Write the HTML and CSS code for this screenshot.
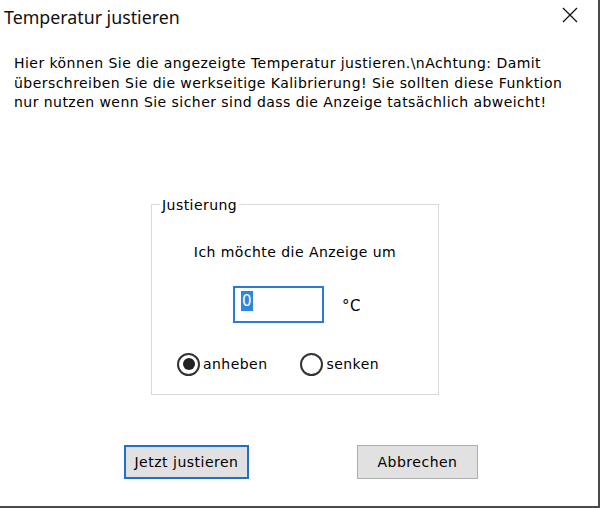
FILE: index.html
```html
<!DOCTYPE html>
<html lang="de">
<head>
<meta charset="utf-8">
<title>Temperatur justieren</title>
<link rel="stylesheet" href="styles.css">
</head>
<body>
<div class="dialog">
  <div class="titlebar">
    <span class="title">Temperatur justieren</span>
    <svg class="close" width="16" height="16" viewBox="0 0 16 16" aria-hidden="true">
      <path d="M1 1 L15 15 M15 1 L1 15" stroke="#111" stroke-width="1.3" fill="none"/>
    </svg>
  </div>
  <p class="message">Hier können Sie die angezeigte Temperatur justieren.\nAchtung: Damit<br>überschreiben Sie die werkseitige Kalibrierung! Sie sollten diese Funktion<br>nur nutzen wenn Sie sicher sind dass die Anzeige tatsächlich abweicht!</p>
  <fieldset class="group">
    <legend class="legend">Justierung</legend>
    <div class="prompt">Ich möchte die Anzeige um</div>
    <div class="value-row">
      <div class="input"><span class="sel">0</span></div>
      <span class="unit">°C</span>
    </div>
    <div class="radios">
      <label class="radio"><span class="dot checked"></span>anheben</label>
      <label class="radio"><span class="dot"></span>senken</label>
    </div>
  </fieldset>
  <div class="buttons">
    <button class="btn default">Jetzt justieren</button>
    <button class="btn">Abbrechen</button>
  </div>
</div>
</body>
</html>
```
FILE: styles.css
```css
html, body {
  margin: 0;
  padding: 0;
  background: #fff;
}
.dialog {
  width: 600px;
  height: 508px;
  box-sizing: border-box;
  border-right: 2px solid #4a4a4a;
  border-bottom: 2px solid #4a4a4a;
  background: #fff;
  display: flex;
  flex-direction: column;
  font-family: "DejaVu Sans", sans-serif;
  font-size: 14px;
  letter-spacing: 0.45px;
  color: #000;
}
.titlebar {
  height: 34px;
  display: flex;
  align-items: center;
  justify-content: space-between;
  padding: 0 20px 0 4px;
}
.title {
  font-family: "Noto Sans", sans-serif;
  font-size: 17.8px;
  letter-spacing: 0;
  line-height: 34px;
  color: #111;
}
.close {
  display: block;
  margin-top: -4px;
}
.message {
  margin: 20px 0 0 14px;
  line-height: 19.5px;
}
.group {
  margin: 84px 0 0 151px;
  width: 288px;
  height: 198px;
  box-sizing: border-box;
  border: 1px solid #d9d9d9;
  padding: 0 8px;
  display: flex;
  flex-direction: column;
  align-items: center;
}
.legend {
  padding: 0 2px;
  margin: 0;
}
.prompt {
  margin-top: 31px;
}
.value-row {
  align-self: flex-start;
  display: flex;
  align-items: center;
  margin-top: 26px;
  margin-left: 73px;
  gap: 18px;
}
.input {
  width: 91px;
  height: 37px;
  box-sizing: border-box;
  border: 2px solid #2a7bd8;
  padding: 3px 0 0 6px;
}
.sel {
  display: inline-block;
  background: #2f86e0;
  color: #fff;
  font-size: 15px;
  line-height: 20px;
  padding: 0 1px;
  letter-spacing: 0;
}
.unit {
  font-size: 15px;
  margin-top: 3px;
}
.radios {
  align-self: flex-start;
  display: flex;
  gap: 33px;
  margin-top: 30px;
  margin-left: 17px;
}
.radio {
  display: flex;
  align-items: center;
  gap: 3px;
}
.dot {
  width: 23px;
  height: 23px;
  box-sizing: border-box;
  border: 2px solid #333;
  border-radius: 50%;
  display: flex;
  align-items: center;
  justify-content: center;
}
.dot.checked::after {
  content: "";
  width: 12px;
  height: 12px;
  border-radius: 50%;
  background: #222;
}
.buttons {
  display: flex;
  margin-top: 50px;
  padding-left: 124px;
  gap: 108px;
}
.btn {
  font-family: "DejaVu Sans", sans-serif;
  font-size: 14px;
  letter-spacing: 0.5px;
  color: #000;
  height: 34px;
  box-sizing: border-box;
  background: #e1e1e1;
  border: 1px solid #adadad;
  padding: 0;
  margin: 0;
}
.btn.default {
  width: 125px;
  border: 2px solid #1f6fce;
}
.btn:not(.default) {
  width: 121px;
}
```
